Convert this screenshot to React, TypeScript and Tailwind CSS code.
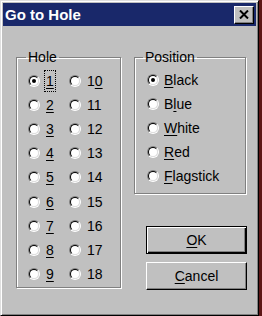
import React, { useState } from 'react';

const font = "font-['Liberation_Sans',Arial,sans-serif]";

const Radio: React.FC<{ checked?: boolean }> = ({ checked }) => (
  <span className="inline-block w-[12px] h-[12px] shrink-0 rounded-full border border-t-[#808080] border-l-[#808080] border-r-white border-b-white">
    <span className="flex w-full h-full items-center justify-center rounded-full border border-t-black border-l-black border-r-[#dfdfdf] border-b-[#dfdfdf] bg-white">
      {checked && <span className="w-[4px] h-[4px] rounded-full bg-black" />}
    </span>
  </span>
);

const App: React.FC = () => {
  const [hole, setHole] = useState(1);
  const [pos, setPos] = useState('Black');

  const holes = Array.from({ length: 18 }, (_, i) => i + 1);

  const holeLabel = (n: number) => {
    if (n < 10) return <span className="underline underline-offset-2">{n}</span>;
    if (n === 10)
      return (
        <span>
          1<span className="underline underline-offset-2">0</span>
        </span>
      );
    return <span>{n}</span>;
  };

  const positions = [
    { name: 'Black', pre: '', key: 'B', post: 'lack' },
    { name: 'Blue', pre: 'B', key: 'l', post: 'ue' },
    { name: 'White', pre: '', key: 'W', post: 'hite' },
    { name: 'Red', pre: '', key: 'R', post: 'ed' },
    { name: 'Flagstick', pre: '', key: 'F', post: 'lagstick' },
  ];

  return (
    <div className={`flex w-[262px] h-[316px] bg-[#5c1616] ${font} text-black`}>
      {/* Dialog */}
      <div className="flex flex-col w-[259px] h-full border border-t-[#dfdfdf] border-l-[#dfdfdf] border-r-black border-b-black bg-[#c0c0c0] p-[2px] shadow-[inset_1px_1px_0_#fff,inset_-1px_-1px_0_#808080]">
        {/* Title bar */}
        <div className="flex items-center justify-between h-[23px] bg-[#19286a] pl-[2px] pr-[2px]">
          <span className="text-[15px] font-bold leading-none text-white">Go to Hole</span>
          <button className="flex items-center justify-center w-[20px] h-[18px] bg-[#c0c0c0] border border-t-white border-l-white border-r-black border-b-black shadow-[inset_-1px_-1px_0_#808080]">
            <svg width="10" height="9" viewBox="0 0 10 9">
              <path d="M1 0.5 L9 8.5 M9 0.5 L1 8.5" stroke="#000" strokeWidth="2" />
            </svg>
          </button>
        </div>

        {/* Body */}
        <div className="flex pt-[23px] pl-[13px] gap-[13px] text-[14px] leading-[16px]">
          {/* Hole */}
          <fieldset className="w-[105px] h-[239px] border border-[#808080] shadow-[inset_1px_1px_0_#fff,1px_1px_0_#fff]">
            <legend className="ml-[9px] px-[2px] leading-[16px]">Hole</legend>
            <div className="grid grid-flow-col grid-rows-[repeat(9,24.1px)] grid-cols-[41px_1fr] pt-[4px] pl-[11px]">
              {holes.map(n => (
                <label key={n} className="flex items-center gap-[5px] cursor-default" onClick={() => setHole(n)}>
                  <Radio checked={hole === n} />
                  <span
                    className={`font-['Liberation_Sans_Narrow','Liberation_Sans',sans-serif] font-normal text-[14px] px-[1px] py-[2px] ${
                      hole === n ? 'outline-1 outline-dotted outline-black' : ''
                    }`}
                  >
                    {holeLabel(n)}
                  </span>
                </label>
              ))}
            </div>
          </fieldset>

          {/* Right column */}
          <div className="flex flex-col">
            <fieldset className="w-[112px] h-[145px] border border-[#808080] shadow-[inset_1px_1px_0_#fff,1px_1px_0_#fff]">
              <legend className="ml-[8px] px-[2px] leading-[16px]">Position</legend>
              <div className="flex flex-col pt-[3px] pl-[12px]">
                {positions.map(p => (
                  <label key={p.name} className="flex items-center h-[24px] gap-[5px] cursor-default" onClick={() => setPos(p.name)}>
                    <Radio checked={pos === p.name} />
                    <span>
                      {p.pre}
                      <span className="underline underline-offset-2">{p.key}</span>
                      {p.post}
                    </span>
                  </label>
                ))}
              </div>
            </fieldset>

            <button className="mt-[32px] ml-[12px] w-[101px] h-[28px] bg-[#c0c0c0] border border-black shadow-[inset_1px_1px_0_#fff,inset_-1px_-1px_0_#000,inset_-2px_-2px_0_#808080] text-[14px]">
              <span className="underline underline-offset-2">O</span>K
            </button>
            <button className="mt-[8px] ml-[12px] w-[101px] h-[28px] bg-[#c0c0c0] border border-t-white border-l-white border-r-black border-b-black shadow-[inset_-1px_-1px_0_#808080] text-[14px]">
              <span className="underline underline-offset-2">C</span>ancel
            </button>
          </div>
        </div>
      </div>
    </div>
  );
};

export default App;
